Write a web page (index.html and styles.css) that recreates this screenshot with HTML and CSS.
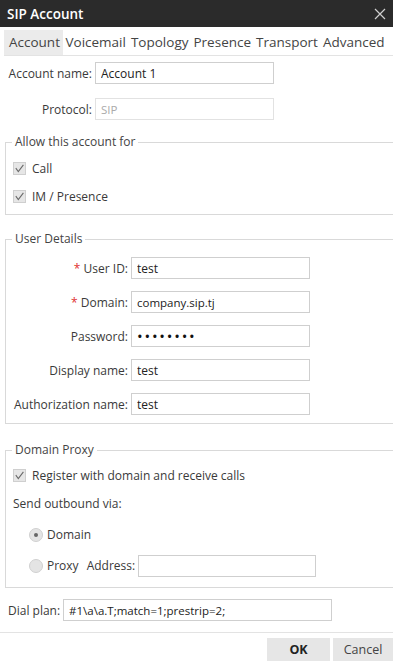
FILE: index.html
```html
<!DOCTYPE html>
<html lang="en">
<head>
  <meta charset="UTF-8">
  <meta name="viewport" content="width=device-width, initial-scale=1.0">
  <title>SIP Account</title>
  <link rel="stylesheet" href="styles.css">
</head>
<body>
  <header class="titlebar">
    <h1>SIP Account</h1>
    <span class="close">
      <svg width="12" height="12" viewBox="0 0 12 12"><path d="M1 1 L11 11 M11 1 L1 11" stroke="#cfcfcf" stroke-width="1.2" fill="none"/></svg>
    </span>
  </header>

  <nav class="tabs">
    <a class="tab active" href="#account">Account</a>
    <a class="tab" href="#voicemail">Voicemail</a>
    <a class="tab" href="#topology">Topology</a>
    <a class="tab" href="#presence">Presence</a>
    <a class="tab" href="#transport">Transport</a>
    <a class="tab" href="#advanced">Advanced</a>
  </nav>

  <main class="content">
    <div class="basic">
      <div class="row">
        <label class="lbl lbl-basic" for="accountName">Account name:</label>
        <input class="field" type="text" id="accountName" value="Account 1">
      </div>
      <div class="row">
        <label class="lbl lbl-basic" for="protocol">Protocol:</label>
        <input class="field disabled" type="text" id="protocol" value="SIP" disabled>
      </div>
    </div>

    <fieldset class="group group-allow">
      <legend>Allow this account for</legend>
      <label class="check"><span class="box"><svg width="11" height="11" viewBox="0 0 11 11"><path d="M1.8 5.2 L4.3 8.6 L9.4 1.8" stroke="#6a6a6a" stroke-width="1.1" fill="none"/></svg></span>Call</label>
      <label class="check"><span class="box"><svg width="11" height="11" viewBox="0 0 11 11"><path d="M1.8 5.2 L4.3 8.6 L9.4 1.8" stroke="#6a6a6a" stroke-width="1.1" fill="none"/></svg></span>IM / Presence</label>
    </fieldset>

    <fieldset class="group group-user">
      <legend>User Details</legend>
      <div class="row">
        <label class="lbl lbl-user" for="userId"><span class="req">*</span> User ID:</label>
        <input class="field" type="text" id="userId" value="test">
      </div>
      <div class="row">
        <label class="lbl lbl-user" for="domain"><span class="req">*</span> Domain:</label>
        <input class="field small" type="text" id="domain" value="company.sip.tj">
      </div>
      <div class="row">
        <label class="lbl lbl-user" for="password">Password:</label>
        <input class="field pass" type="password" id="password" value="12345678">
      </div>
      <div class="row">
        <label class="lbl lbl-user" for="displayName">Display name:</label>
        <input class="field" type="text" id="displayName" value="test">
      </div>
      <div class="row">
        <label class="lbl lbl-user" for="authName">Authorization name:</label>
        <input class="field" type="text" id="authName" value="test">
      </div>
    </fieldset>

    <fieldset class="group group-proxy">
      <legend>Domain Proxy</legend>
      <label class="check"><span class="box"><svg width="11" height="11" viewBox="0 0 11 11"><path d="M1.8 5.2 L4.3 8.6 L9.4 1.8" stroke="#6a6a6a" stroke-width="1.1" fill="none"/></svg></span>Register with domain and receive calls</label>
      <p class="send-via">Send outbound via:</p>
      <label class="radio"><span class="dot on"></span>Domain</label>
      <div class="radio">
        <span class="dot"></span>Proxy
        <span class="addr-lbl">Address:</span>
        <input class="field addr" type="text" aria-label="Proxy address">
      </div>
    </fieldset>

    <div class="row dial">
      <label class="lbl-dial" for="dialPlan">Dial plan:</label>
      <input class="field dial-field small" type="text" id="dialPlan" value="#1\a\a.T;match=1;prestrip=2;">
    </div>
  </main>

  <footer class="actions">
    <button class="btn ok" type="button">OK</button>
    <button class="btn cancel" type="button">Cancel</button>
  </footer>
</body>
</html>
```

FILE: styles.css
```css
body {
  font-family: 'Open Sans', 'Noto Sans', sans-serif;
  font-size: 12px;
  color: #3a3a3a;
  margin: 0;
  padding: 0;
  background-color: #fff;
  width: 393px;
  height: 663px;
  overflow: hidden;
}

.titlebar {
  background-color: #2b2b2b;
  height: 27px;
  display: flex;
  align-items: center;
  justify-content: space-between;
  padding: 0 7px;
}

.titlebar h1 {
  margin: 0;
  color: #fff;
  font-size: 13.5px;
  font-weight: 600;
}

.close {
  display: flex;
}

.tabs {
  display: flex;
  margin: 3px 0 0 4px;
  height: 25px;
  border-bottom: 1px solid #e3e3e3;
  white-space: nowrap;
}

.tab {
  color: #444;
  text-decoration: none;
  font-size: 13.5px;
  padding: 0 2.5px;
  line-height: 25px;
}

.tab.active {
  background-color: #ebebeb;
  padding-left: 5px;
  padding-right: 3px;
}

.content {
  padding-top: 6px;
}

.basic {
  display: flex;
  flex-direction: column;
  gap: 14px;
  margin-bottom: 14px;
}

.row {
  display: flex;
  align-items: center;
  gap: 3px;
}

.lbl {
  text-align: right;
  flex: none;
}

.lbl-basic {
  width: 92px;
}

.lbl-user {
  width: 122px;
}

.req {
  color: #e03030;
}

.field {
  width: 179px;
  height: 22px;
  box-sizing: border-box;
  border: 1px solid #cfcfcf;
  padding: 0 5px;
  font-family: inherit;
  font-size: 12px;
  color: #222;
  background-color: #fff;
  outline: none;
}

.field.small {
  font-size: 11.5px;
}

.field.disabled {
  color: #aaa;
  border-color: #e2e2e2;
  font-size: 11.5px;
}

.field.pass {
  font-size: 15px;
  letter-spacing: 1.8px;
  color: #111;
}

.group {
  margin: 0 0 0 5px;
  border: 1px solid #d9d9d9;
  border-right: none;
  padding: 0;
}

.group legend {
  padding: 0 3px;
  margin-left: 6px;
  line-height: 16px;
  color: #444;
}

.check {
  display: flex;
  align-items: center;
  height: 28px;
  margin-left: 7px;
}

.box {
  width: 13px;
  height: 13px;
  box-sizing: border-box;
  border: 1px solid #cfcfcf;
  background-color: #e6e6e6;
  display: flex;
  align-items: center;
  justify-content: center;
  margin-right: 6px;
  flex: none;
}

.group-allow {
  padding: 4px 0 4px 0;
  margin-bottom: 16px;
}

.group-user {
  padding: 10px 0 8px 0;
  margin-bottom: 18px;
}

.group-user .row + .row {
  margin-top: 12px;
}

.group-proxy {
  padding: 3px 0 6px 0;
  margin-bottom: 11px;
}

.send-via {
  margin: 6px 0 7px 7px;
  line-height: 17px;
}

.radio {
  display: flex;
  align-items: center;
  height: 31px;
  margin-left: 23px;
}

.dot {
  width: 14px;
  height: 14px;
  box-sizing: border-box;
  border-radius: 50%;
  border: 1px solid #d0d0d0;
  background-color: #e4e4e4;
  margin-right: 4px;
  position: relative;
  flex: none;
}

.dot.on::after {
  content: '';
  position: absolute;
  left: 4px;
  top: 4px;
  width: 4px;
  height: 4px;
  border-radius: 50%;
  background-color: #666;
}

.addr-lbl {
  margin: 0 3px 0 8px;
}

.field.addr {
  width: 178px;
}

.dial {
  padding-left: 8px;
}

.field.dial-field {
  width: 269px;
}

.actions {
  border-top: 1px solid #e3e3e3;
  margin-top: 11px;
  padding-top: 5px;
  display: flex;
  justify-content: flex-end;
  gap: 3px;
}

.btn {
  background-color: #e6e6e6;
  border: none;
  height: 23px;
  width: 63px;
  font-family: inherit;
  font-size: 12.5px;
  color: #444;
  padding: 0;
}

.btn.cancel {
  width: 60px;
}

.btn.ok {
  font-weight: 700;
  color: #222;
}
```
